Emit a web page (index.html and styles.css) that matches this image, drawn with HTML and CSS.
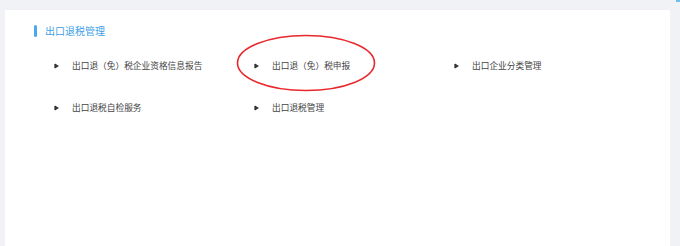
FILE: index.html
```html
<!DOCTYPE html>
<html lang="zh">
<head>
<meta charset="utf-8">
<link rel="stylesheet" href="styles.css">
</head>
<body>
<div class="corner"></div>
<div class="panel">
  <div class="title"><span class="bar"></span><span class="title-text">出口退税管理</span></div>
  <div class="grid">
    <div class="item"><svg class="bullet" width="5" height="6" viewBox="0 0 5 6"><rect x="0" y="1" width="1" height="4" fill="#777"/><polygon points="1,0.5 5,3 1,5.5" fill="#333"/></svg><span>出口退（免）税企业资格信息报告</span></div>
    <div class="item"><svg class="bullet" width="5" height="6" viewBox="0 0 5 6"><rect x="0" y="1" width="1" height="4" fill="#777"/><polygon points="1,0.5 5,3 1,5.5" fill="#333"/></svg><span>出口退（免）税申报</span></div>
    <div class="item"><svg class="bullet" width="5" height="6" viewBox="0 0 5 6"><rect x="0" y="1" width="1" height="4" fill="#777"/><polygon points="1,0.5 5,3 1,5.5" fill="#333"/></svg><span>出口企业分类管理</span></div>
    <div class="item"><svg class="bullet" width="5" height="6" viewBox="0 0 5 6"><rect x="0" y="1" width="1" height="4" fill="#777"/><polygon points="1,0.5 5,3 1,5.5" fill="#333"/></svg><span>出口退税自检服务</span></div>
    <div class="item"><svg class="bullet" width="5" height="6" viewBox="0 0 5 6"><rect x="0" y="1" width="1" height="4" fill="#777"/><polygon points="1,0.5 5,3 1,5.5" fill="#333"/></svg><span>出口退税管理</span></div>
  </div>
  <svg class="ring" width="142" height="60" viewBox="0 0 142 60"><ellipse cx="71" cy="30" rx="68.5" ry="27.5" fill="none" stroke="#e8282c" stroke-width="1.6"/></svg>
</div>
</body>
</html>
```
FILE: styles.css
```css
html, body {
  margin: 0;
  padding: 0;
}
body {
  background: #f1f2f6;
  width: 680px;
  height: 246px;
  overflow: hidden;
  position: relative;
  font-family: "Noto Sans CJK SC", "Noto Sans", sans-serif;
}
.corner {
  position: absolute;
  right: 0;
  top: 0;
  width: 4px;
  height: 2px;
  background: #6fc0ee;
}
.panel {
  position: relative;
  margin: 10px 10px 0 5px;
  height: 236px;
  background: #ffffff;
  padding: 15px 0 0 29px;
  box-sizing: border-box;
}
.title {
  display: flex;
  align-items: center;
  height: 12px;
}
.bar {
  width: 3px;
  height: 12px;
  border-radius: 2px;
  background: #4aa8ee;
  margin-right: 8px;
}
.title-text {
  font-size: 10px;
  line-height: 12px;
  color: #3d9fe6;
}
.grid {
  display: grid;
  grid-template-columns: repeat(3, 200px);
  row-gap: 30px;
  margin-top: 23px;
  margin-left: 20px;
}
.item {
  display: flex;
  align-items: center;
  height: 12px;
  font-size: 8.7px;
  line-height: 12px;
  color: #444444;
}
.bullet {
  margin-right: 13px;
  flex: none;
}
.ring {
  position: absolute;
  left: 230px;
  top: 23px;
}
```
